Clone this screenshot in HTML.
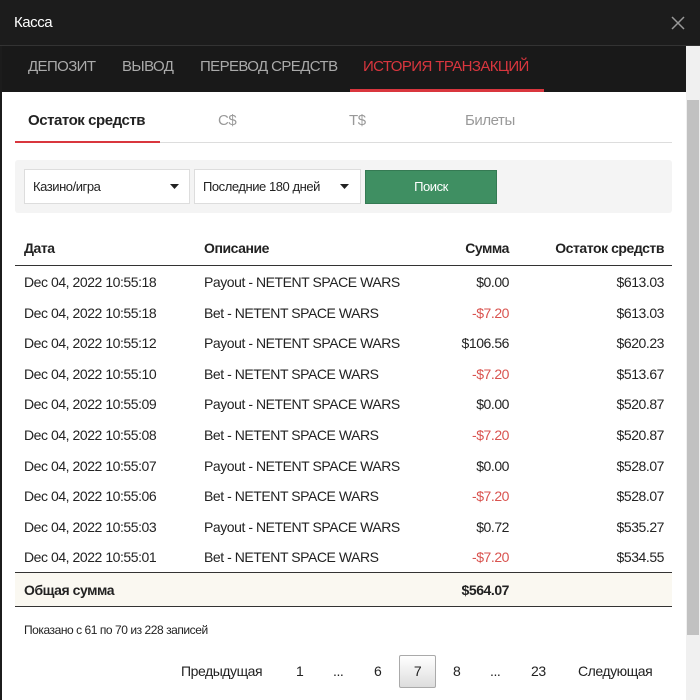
<!DOCTYPE html>
<html><head><meta charset="utf-8"><style>
*{margin:0;padding:0;box-sizing:border-box}
body{width:700px;height:700px;overflow:hidden;background:#fff;font-family:"Liberation Sans",sans-serif;font-size:14px;color:#222;position:relative;letter-spacing:-0.45px}
.a{position:absolute;white-space:nowrap}
.r{text-align:right}
.red{color:#d9534f}
.b{font-weight:bold}
</style></head><body>
<div class="a" style="left:0;top:0;width:700px;height:46px;background:#1c1c1c;border-bottom:1px solid #333"></div>
<div class="a" style="left:14px;top:14px;color:#fff;font-size:15px">Касса</div>
<svg class="a" style="left:671px;top:16px" width="14" height="14"><path d="M1 1L13 13M13 1L1 13" stroke="#999" stroke-width="1.5"/></svg>
<div class="a" style="left:0;top:46px;width:686px;height:46px;background:#191919"></div>
<div class="a" style="left:28px;top:58px;color:#aaa;font-size:15px;letter-spacing:-0.6px">ДЕПОЗИТ</div>
<div class="a" style="left:122px;top:58px;color:#aaa;font-size:15px;letter-spacing:-0.6px">ВЫВОД</div>
<div class="a" style="left:200px;top:58px;color:#aaa;font-size:15px;letter-spacing:-0.6px">ПЕРЕВОД СРЕДСТВ</div>
<div class="a" style="left:363px;top:58px;color:#d9363e;font-size:15px;letter-spacing:-0.6px">ИСТОРИЯ ТРАНЗАКЦИЙ</div>
<div class="a" style="left:350px;top:89px;width:194px;height:3px;background:#d9363e"></div>
<div class="a" style="left:686px;top:46px;width:14px;height:654px;background:#f0f0f0"></div>
<div class="a" style="left:687px;top:100px;width:12px;height:535px;background:#c1c1c1"></div>
<div class="a" style="left:0;top:46px;width:2px;height:654px;background:#1c1c1c"></div>

<div class="a b" style="left:28px;top:112px;font-size:15px;color:#222">Остаток средств</div>
<div class="a" style="left:218px;top:112px;font-size:15px;color:#999">C$</div>
<div class="a" style="left:349px;top:112px;font-size:15px;color:#999">T$</div>
<div class="a" style="left:465px;top:112px;font-size:15px;color:#999">Билеты</div>
<div class="a" style="left:15px;top:142px;width:657px;height:1px;background:#ddd"></div>
<div class="a" style="left:15px;top:141px;width:145px;height:2px;background:#d9363e"></div>

<div class="a" style="left:15px;top:160px;width:657px;height:53px;background:#f4f4f4;border-radius:3px"></div>
<div class="a" style="left:24px;top:169px;width:166px;height:35px;background:#fff;border:1px solid #ddd"></div>
<div class="a" style="left:33px;top:179px;font-size:13px">Казино/игра</div>
<svg class="a" style="left:170px;top:184px" width="9" height="5"><path d="M0 0H9L4.5 5Z" fill="#222"/></svg>
<div class="a" style="left:194px;top:169px;width:167px;height:35px;background:#fff;border:1px solid #ddd"></div>
<div class="a" style="left:203px;top:179px;font-size:13px">Последние 180 дней</div>
<svg class="a" style="left:340px;top:184px" width="9" height="5"><path d="M0 0H9L4.5 5Z" fill="#222"/></svg>
<div class="a" style="left:365px;top:170px;width:132px;height:34px;background:#3f8f62;border:1px solid #357a53;color:#fff;font-size:13px;text-align:center;line-height:32px">Поиск</div>

<div class="a b" style="left:24px;top:240px">Дата</div>
<div class="a b" style="left:204px;top:240px">Описание</div>
<div class="a b r" style="left:409px;top:240px;width:100px">Сумма</div>
<div class="a b r" style="left:514px;top:240px;width:150px">Остаток средств</div>
<div class="a" style="left:15px;top:265px;width:657px;height:1px;background:#333"></div>

<div id="rows"></div>
<div class="a" style="left:15px;top:572px;width:657px;height:35px;background:#faf8f1;border-top:1px solid #333;border-bottom:1px solid #333"></div>
<div class="a b" style="left:24px;top:582px">Общая сумма</div>
<div class="a b r" style="left:409px;top:582px;width:100px">$564.07</div>
<div class="a" style="left:24px;top:623px;font-size:12px">Показано с 61 по 70 из 228 записей</div>

<div class="a" style="left:181px;top:663px">Предыдущая</div>
<div class="a" style="left:296px;top:663px">1</div>
<div class="a" style="left:333px;top:663px">...</div>
<div class="a" style="left:374px;top:663px">6</div>
<div class="a" style="left:399px;top:655px;width:37px;height:33px;border:1px solid #aaa;border-radius:2px;background:linear-gradient(#fff,#ddd);text-align:center;line-height:31px">7</div>
<div class="a" style="left:453px;top:663px">8</div>
<div class="a" style="left:490px;top:663px">...</div>
<div class="a" style="left:531px;top:663px">23</div>
<div class="a" style="left:578px;top:663px">Следующая</div>
<script>
var d=[["18","Payout","$0.00","$613.03"],["18","Bet","-$7.20","$613.03"],["12","Payout","$106.56","$620.23"],["10","Bet","-$7.20","$513.67"],["09","Payout","$0.00","$520.87"],["08","Bet","-$7.20","$520.87"],["07","Payout","$0.00","$528.07"],["06","Bet","-$7.20","$528.07"],["03","Payout","$0.72","$535.27"],["01","Bet","-$7.20","$534.55"]];
var h="";d.forEach(function(r,i){var t=274+i*30.6;
h+='<div class="a" style="left:24px;top:'+t+'px">Dec 04, 2022 10:55:'+r[0]+'</div>'+
'<div class="a" style="left:204px;top:'+t+'px">'+r[1]+' - NETENT SPACE WARS</div>'+
'<div class="a r'+(r[1]=="Bet"?' red':'')+'" style="left:409px;top:'+t+'px;width:100px">'+r[2]+'</div>'+
'<div class="a r" style="left:514px;top:'+t+'px;width:150px">'+r[3]+'</div>';});
document.getElementById("rows").innerHTML=h;
</script>
</body></html>
